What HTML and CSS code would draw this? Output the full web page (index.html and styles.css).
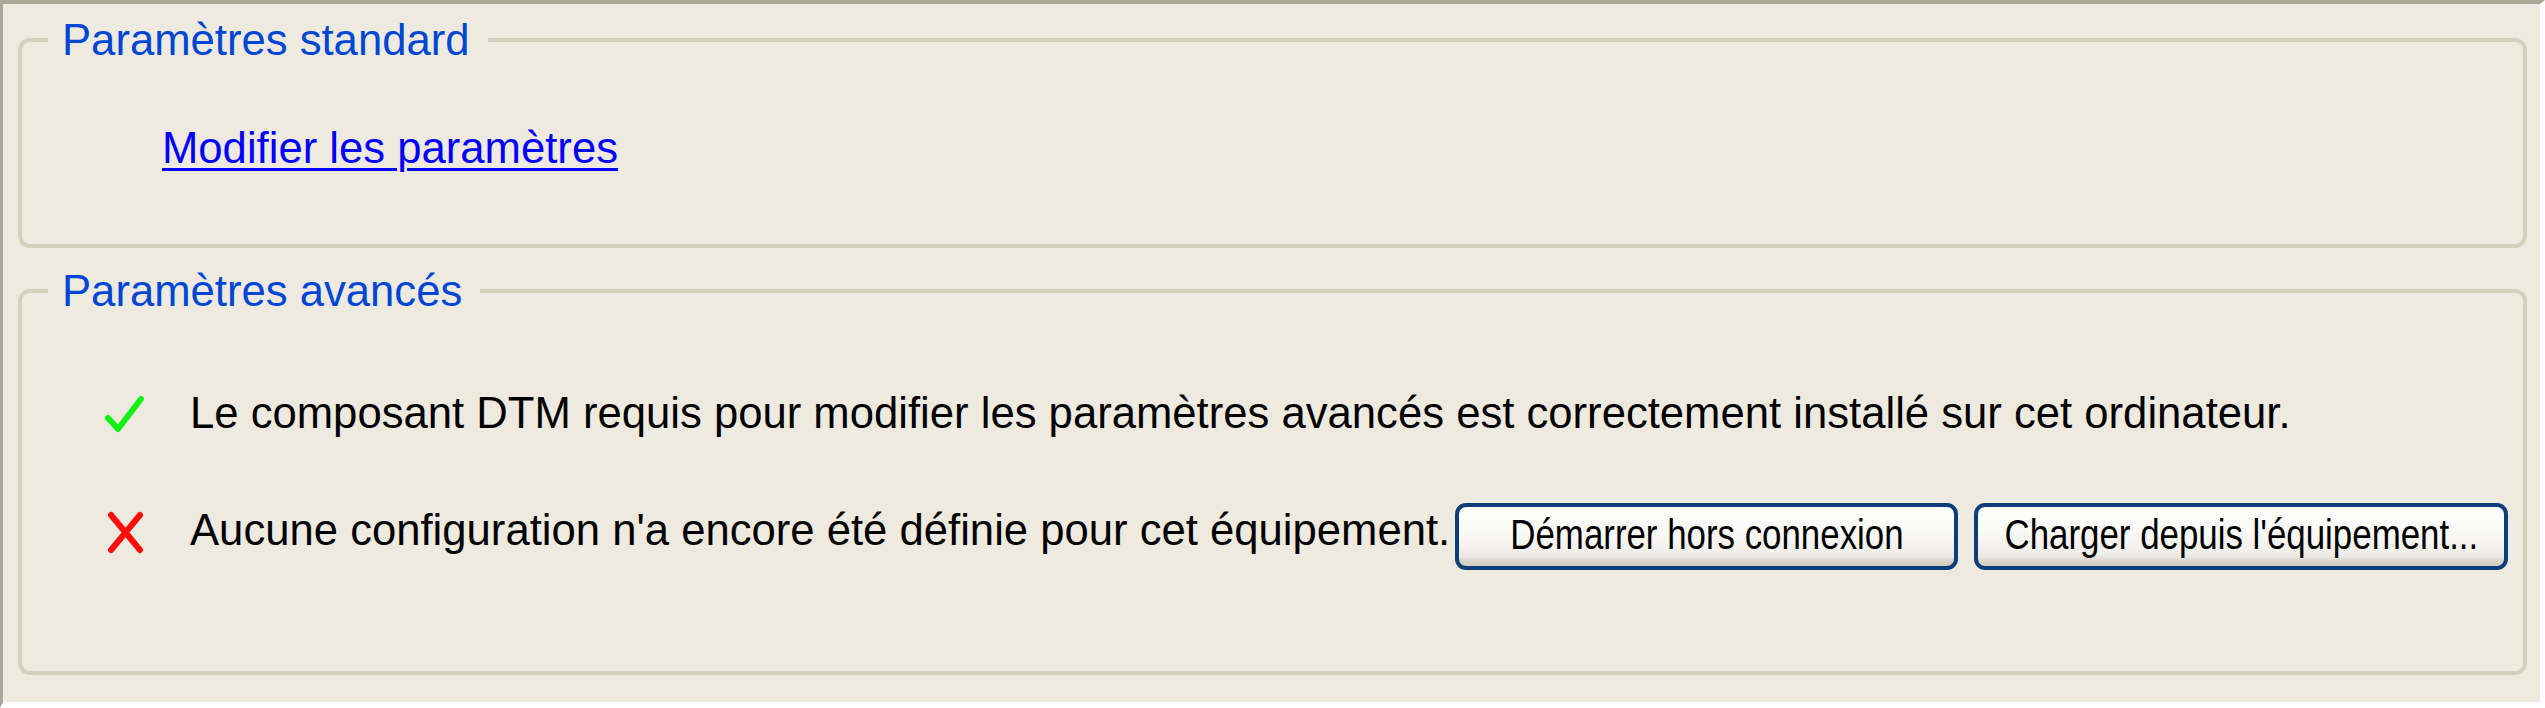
FILE: index.html
```html
<!DOCTYPE html>
<html lang="fr">
<head>
<meta charset="utf-8">
<title>Paramètres</title>
<link rel="stylesheet" href="styles.css">
</head>
<body>
<div class="window">
  <fieldset class="group group-standard">
    <legend class="group-title">Paramètres standard</legend>
    <div class="group-body">
      <a class="link" href="#">Modifier les paramètres</a>
    </div>
  </fieldset>
  <fieldset class="group group-advanced">
    <legend class="group-title">Paramètres avancés</legend>
    <div class="group-body">
      <div class="status-row">
        <svg class="status-icon" width="50" height="50" viewBox="0 0 50 50" aria-hidden="true">
          <polyline points="8,30 18,41 41,11" fill="none" stroke="#14f014" stroke-width="6" stroke-linecap="round" stroke-linejoin="round"/>
        </svg>
        <span class="status-text">Le composant DTM requis pour modifier les paramètres avancés est correctement installé sur cet ordinateur.</span>
      </div>
      <div class="status-row status-row-actions">
        <svg class="status-icon icon-offset" width="50" height="50" viewBox="0 0 50 50" aria-hidden="true">
          <path d="M11 10 L40 45 M40 10 L11 45" fill="none" stroke="#ff0a0a" stroke-width="6" stroke-linecap="round"/>
        </svg>
        <span class="status-text text-offset">Aucune configuration n'a encore été définie pour cet équipement.</span>
        <button class="xp-button btn-offline" type="button"><span class="btn-label">Démarrer hors connexion</span></button>
        <button class="xp-button btn-load" type="button"><span class="btn-label">Charger depuis l'équipement...</span></button>
      </div>
    </div>
  </fieldset>
</div>
</body>
</html>
```

FILE: styles.css
```css
* {
  box-sizing: border-box;
}

html, body {
  margin: 0;
  padding: 0;
  background: #ffffff;
}

body {
  font-family: "Liberation Sans", Arial, sans-serif;
  font-size: 43.65px;
  color: #000000;
}

.window {
  width: 2545px;
  height: 708px;
  background: #eeeadf;
  border-style: solid;
  border-width: 4px 5px 6px 3px;
  border-color: #aca899 #ffffff #ffffff #aca899;
  padding-top: 11px;
  overflow: hidden;
}

.group {
  margin: 0 13px 0 15px;
  border: 4px solid #d3d0bd;
  border-radius: 12px;
  padding: 0 0 0 26px;
  min-width: 0;
}

.group-title {
  color: #0046d5;
  font-size: 43.65px;
  line-height: 50px;
  padding: 0 18px 0 14px;
}

.group-standard {
  padding-top: 58px;
  padding-bottom: 71px;
}

.group-advanced {
  margin-top: 18px;
  padding-top: 72px;
  padding-bottom: 101px;
}

.group-standard .group-body {
  padding-left: 114px;
  line-height: 50px;
  height: 50px;
}

.link {
  color: #0000ff;
  text-decoration: underline;
  text-decoration-thickness: 3px;
  text-underline-offset: 5px;
}

.group-advanced .group-body {
  padding-left: 52px;
  display: flex;
  flex-direction: column;
  gap: 65px;
}

.status-row {
  display: flex;
  align-items: flex-start;
  line-height: 50px;
}

.status-icon {
  flex: none;
  display: block;
  margin-right: 40px;
}

.status-text {
  white-space: nowrap;
}

.icon-offset,
.text-offset {
  margin-top: 2px;
}

.xp-button {
  flex: none;
  height: 67px;
  border: 4px solid #0a3f7a;
  border-radius: 11px;
  background: linear-gradient(to bottom, #ffffff 0%, #fbfbf9 35%, #f2f1ec 70%, #ebe9e2 84%, #d8d3c8 92%, #d2ccbf 100%);
  font-family: "Liberation Sans", Arial, sans-serif;
  font-size: 42px;
  color: #000000;
  padding: 0 0 4px 0;
  display: flex;
  align-items: center;
  justify-content: center;
  line-height: 42px;
}

.btn-label {
  display: inline-block;
  white-space: nowrap;
  transform: scaleX(0.83);
  transform-origin: center;
}

.btn-offline {
  width: 503px;
  margin-left: 5px;
}

.btn-load {
  width: 534px;
  margin-left: 16px;
}
```
